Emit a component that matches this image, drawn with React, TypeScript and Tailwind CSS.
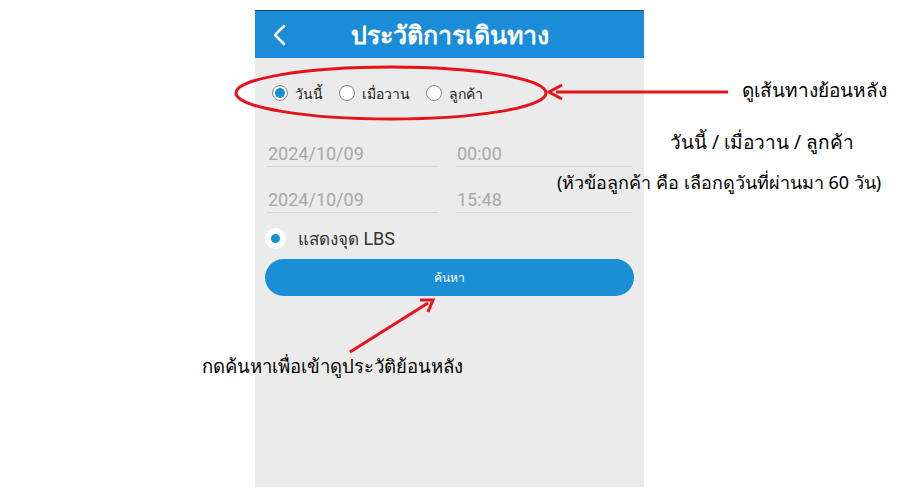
import React from "react";

const Radio = ({ checked, label }: { checked?: boolean; label: string }) => (
  <div className="flex items-center gap-[7px]">
    <span
      className={
        checked
          ? "w-[16px] h-[16px] rounded-full border border-[#8a8a8a] bg-white flex items-center justify-center"
          : "w-[16px] h-[16px] rounded-full border border-[#8a8a8a] bg-white"
      }
    >
      {checked && <span className="w-[10px] h-[10px] rounded-full bg-[#1a8fd3]" />}
    </span>
    <span className="text-[14px] text-[#222]">{label}</span>
  </div>
);

const Field = ({ value, width }: { value: string; width: string }) => (
  <div className={`${width} border-b border-[#d6d6d6] h-[27px] flex items-end`}>
    <span className="text-[18px] leading-[25px] text-[#a8a8a8] pl-[1px] font-['Roboto']">{value}</span>
  </div>
);

const App = () => {
  return (
    <div
      className="relative w-[900px] h-[500px] bg-white overflow-hidden"
      style={{ fontFamily: '"Noto Sans", "DejaVu Sans", sans-serif' }}
    >
      {/* phone screen */}
      <div className="ml-[255px] mt-[10px] w-[389px] h-[477px] bg-[#ebebeb] flex flex-col">
        <div className="h-[48px] bg-[#1a8cd8] border-t border-[#1d3f5c] flex items-center relative">
          <svg className="absolute left-[16px] top-[13px]" width="18" height="22" viewBox="0 0 18 22">
            <path d="M13 2 L4 11 L13 20" fill="none" stroke="white" strokeWidth="2.5" strokeLinecap="round" strokeLinejoin="round" />
          </svg>
          <div className="w-full text-center text-white text-[25px] font-bold">ประวัติการเดินทาง</div>
        </div>

        <div className="flex items-center gap-[16px] pl-[17px] mt-[24px] h-[22px]">
          <Radio checked label="วันนี้" />
          <Radio label="เมื่อวาน" />
          <Radio label="ลูกค้า" />
        </div>

        <div className="flex flex-col gap-[19px] mt-[36px] px-[12px]">
          <div className="flex gap-[18px]">
            <Field value="2024/10/09" width="w-[171px]" />
            <Field value="00:00" width="w-[176px]" />
          </div>
          <div className="flex gap-[18px]">
            <Field value="2024/10/09" width="w-[171px]" />
            <Field value="15:48" width="w-[176px]" />
          </div>
        </div>

        <div className="flex items-center gap-[12px] pl-[10px] mt-[12px]">
          <span className="w-[21px] h-[21px] rounded-full bg-white flex items-center justify-center">
            <span className="w-[9px] h-[9px] rounded-full bg-[#1a8fd3]" />
          </span>
          <span className="text-[17px] text-[#333]">
            แสดงจุด <span className="font-['Roboto'] text-[18px]">LBS</span>
          </span>
        </div>

        <div className="mx-[10px] mt-[7px] h-[37px] rounded-full bg-[#1a8fd6] flex items-center justify-center">
          <span className="text-white text-[12px]">ค้นหา</span>
        </div>
      </div>

      {/* annotations */}
      <svg className="absolute left-0 top-0" width="900" height="500" viewBox="0 0 900 500">
        <ellipse cx="391" cy="93" rx="155" ry="26" fill="none" stroke="#e5141b" strokeWidth="3" />
        <line x1="556" y1="92" x2="728" y2="92" stroke="#e5141b" strokeWidth="3" />
        <path d="M562 85 L549 92 L562 99" fill="none" stroke="#e5141b" strokeWidth="3" />
        <line x1="350" y1="352" x2="428" y2="303" stroke="#e5141b" strokeWidth="3" />
        <path d="M420 300 L433 300 L428 312" fill="none" stroke="#e5141b" strokeWidth="3" />
      </svg>

      <div className="absolute left-[742px] top-[76px] text-[19px] text-black">ดูเส้นทางย้อนหลัง</div>
      <div className="absolute left-[670px] top-[128px] text-[19px] text-black">วันนี้ / เมื่อวาน / ลูกค้า</div>
      <div className="absolute left-[557px] top-[169px] text-[18px] text-black">(หัวข้อลูกค้า คือ เลือกดูวันที่ผ่านมา 60 วัน)</div>
      <div className="absolute left-[202px] top-[352px] text-[18.5px] text-black">กดค้นหาเพื่อเข้าดูประวัติย้อนหลัง</div>
    </div>
  );
};

export default App;
